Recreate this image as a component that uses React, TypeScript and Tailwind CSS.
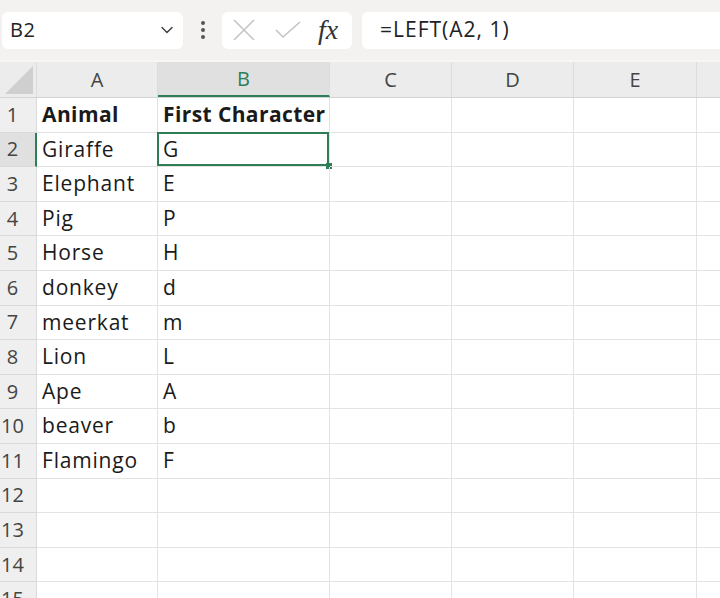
import { ChevronDown } from 'lucide-react';

const columns = [
  { key: 'A', width: 'w-[121px]' },
  { key: 'B', width: 'w-[172px]' },
  { key: 'C', width: 'w-[122px]' },
  { key: 'D', width: 'w-[122px]' },
  { key: 'E', width: 'w-[123px]' },
  { key: '', width: 'w-[120px]' },
];

const data: [string, string][] = [
  ['Animal', 'First Character'],
  ['Giraffe', 'G'],
  ['Elephant', 'E'],
  ['Pig', 'P'],
  ['Horse', 'H'],
  ['donkey', 'd'],
  ['meerkat', 'm'],
  ['Lion', 'L'],
  ['Ape', 'A'],
  ['beaver', 'b'],
  ['Flamingo', 'F'],
];

const rowNumbers = Array.from({ length: 15 }, (_, i) => i + 1);

function Toolbar() {
  return (
    <div className="flex h-[60px] shrink-0 items-center bg-[#f3f2f1]">
      <div className="ml-[2px] flex h-[37px] w-[181px] items-center justify-between rounded-md bg-white pl-[8px] pr-[6px]">
        <span className="text-[20px] tracking-[0.5px] text-[#222]">B2</span>
        <ChevronDown className="h-5 w-5 text-[#444]" strokeWidth={1.8} />
      </div>
      <div className="flex w-[39px] flex-col items-center gap-[3px]">
        <span className="h-[4px] w-[4px] rounded-full bg-[#555]" />
        <span className="h-[4px] w-[4px] rounded-full bg-[#555]" />
        <span className="h-[4px] w-[4px] rounded-full bg-[#555]" />
      </div>
      <div className="flex h-[37px] w-[130px] items-center rounded-md bg-white pl-[10px]">
        <svg width="24" height="24" viewBox="0 0 24 24" className="text-[#c4c4c4]">
          <path d="M2 2L22 22M22 2L2 22" stroke="currentColor" strokeWidth="1.6" fill="none" />
        </svg>
        <svg width="28" height="24" viewBox="0 0 28 24" className="ml-[18px] text-[#c4c4c4]">
          <path d="M2 12L9 19L26 4" stroke="currentColor" strokeWidth="1.6" fill="none" />
        </svg>
        <span className="ml-[16px] font-['Liberation_Serif',serif] text-[28px] italic leading-none text-[#333]">
          fx
        </span>
      </div>
      <div className="ml-[10px] flex h-[37px] flex-1 items-center rounded-l-md bg-white pl-[18px]">
        <span className="text-[21px] tracking-[1px] text-[#222]">=LEFT(A2, 1)</span>
      </div>
    </div>
  );
}

function HeaderRow() {
  return (
    <div className="flex h-[36px] shrink-0 border-b border-[#d4d4d4] bg-[#ececec]">
      <div className="relative w-[37px] shrink-0 border-r border-[#dcdcdc]">
        <svg width="28" height="28" viewBox="0 0 28 28" className="absolute bottom-[3px] right-[3px]">
          <path d="M28 0L28 28L0 28Z" fill="#cfcfcf" />
        </svg>
      </div>
      {columns.map((col, i) => {
        const selected = col.key === 'B';
        return (
          <div
            key={i}
            className={`flex ${col.width} shrink-0 items-center justify-center border-r border-[#dcdcdc] text-[20px] ${
              selected
                ? 'border-b-[2px] border-b-[#2e7d57] bg-[#e0e0e0] text-[#2e7d57]'
                : 'text-[#444]'
            }`}
          >
            {col.key}
          </div>
        );
      })}
    </div>
  );
}

function Row({ n }: { n: number }) {
  const values = data[n - 1];
  const selected = n === 2;
  return (
    <div className="flex h-[34.6px] shrink-0">
      <div
        className={`flex w-[37px] shrink-0 items-center border-b border-[#dadada] ${
          selected ? 'border-r-[2px] border-r-[#2e7d57] bg-[#e0e0e0]' : 'border-r border-[#dadada] bg-[#efefef]'
        }`}
      >
        <span className="w-[25px] text-center text-[20px] text-[#444]">{n}</span>
      </div>
      {columns.map((col, i) => {
        const text = values && i < 2 ? values[i] : '';
        const bold = n === 1;
        return (
          <div
            key={i}
            className={`relative flex ${col.width} shrink-0 items-center overflow-visible whitespace-nowrap border-b border-r border-[#e3e3e3] pl-[5px] text-[21px] text-[#1a1a1a] ${
              bold ? 'font-bold tracking-[0.4px]' : 'tracking-[0.8px]'
            }`}
          >
            {text}
            {selected && col.key === 'B' && (
              <>
                <div className="pointer-events-none absolute -left-[1px] -top-[1px] bottom-0 right-0 border-[2px] border-[#2e7d57]" />
                <div className="absolute -bottom-[3px] -right-[3px] h-[6px] w-[6px] bg-[#2e7d57]" />
              </>
            )}
          </div>
        );
      })}
    </div>
  );
}

export default function App() {
  return (
    <div className="flex h-[598px] w-[720px] flex-col overflow-hidden bg-white font-['Open_Sans','Noto_Sans',sans-serif]">
      <Toolbar />
      <div className="h-[2px] shrink-0 bg-[#f7f6f5]" />
      <HeaderRow />
      {rowNumbers.map((n) => (
        <Row key={n} n={n} />
      ))}
    </div>
  );
}
